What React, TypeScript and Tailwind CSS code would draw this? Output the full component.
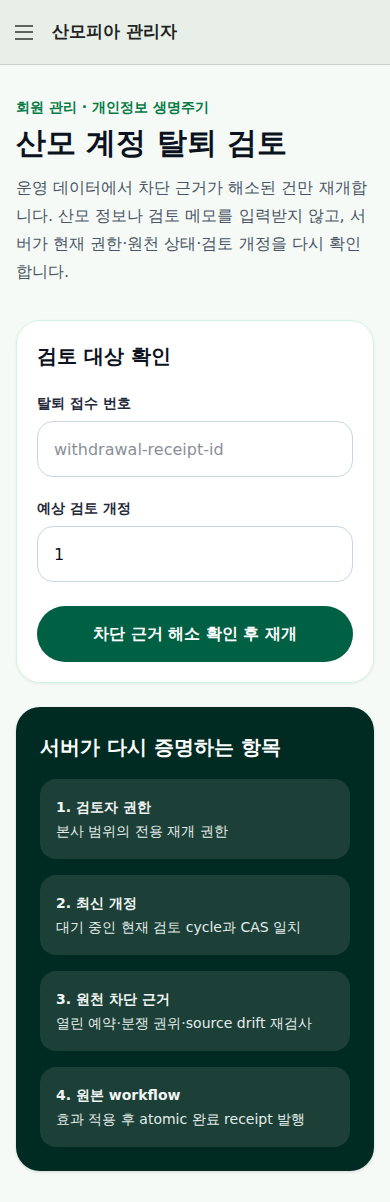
export default function App() {
  const items = [
    { t: "1. 검토자 권한", d: "본사 범위의 전용 재개 권한" },
    { t: "2. 최신 개정", d: "대기 중인 현재 검토 cycle과 CAS 일치" },
    { t: "3. 원천 차단 근거", d: "열린 예약·분쟁 권위·source drift 재검사" },
    { t: "4. 원본 workflow", d: "효과 적용 후 atomic 완료 receipt 발행" },
  ];
  return (
    <div
      className="min-h-[1202px] bg-[#f5faf6] text-[#0f172a]"
      style={{ fontFamily: '"DejaVu Sans", sans-serif' }}
    >
      <header className="h-[65px] bg-[#e8efe9] border-b border-[#c9cfcb] flex items-center px-[15px] gap-[19px]">
        <div className="flex flex-col gap-[4.5px] w-[18px]">
          <span className="block h-[2px] bg-[#5f6360]" />
          <span className="block h-[2px] bg-[#5f6360]" />
          <span className="block h-[2px] bg-[#5f6360]" />
        </div>
        <span className="text-[17px] font-semibold text-[#1f2321]">산모피아 관리자</span>
      </header>

      <main className="px-4 pt-[32px] pb-8">
        <p className="text-[14px] font-bold text-[#067a47] leading-[20px]">회원 관리 · 개인정보 생명주기</p>
        <h1 className="mt-[8px] text-[30px] font-bold leading-[36px] text-[#0b1220]">산모 계정 탈퇴 검토</h1>
        <p className="mt-[13px] text-[16px] leading-[28px] text-[#4a5565]">
          운영 데이터에서 차단 근거가 해소된 건만 재개합니다. 산모 정보나 검토 메모를 입력받지 않고, 서버가 현재 권한·원천 상태·검토 개정을 다시 확인합니다.
        </p>

        <section className="mt-[34px] bg-white rounded-[24px] border border-[#d4f2e1] shadow-[0_1px_3px_rgba(0,0,0,0.06)] px-[20px] pt-[20px] pb-[20px]">
          <h2 className="text-[20px] font-semibold leading-[30px] text-[#0b1220]">검토 대상 확인</h2>
          <label className="block mt-[22px] text-[14px] font-bold leading-[20px] text-[#1e293b]">탈퇴 접수 번호</label>
          <input
            className="mt-[8px] w-full h-[56px] rounded-[16px] border border-[#cbd5e1] px-[16px] text-[16px] outline-none placeholder:text-[#8a8f98]"
            placeholder="withdrawal-receipt-id"
          />
          <label className="block mt-[21px] text-[14px] font-bold leading-[20px] text-[#1e293b]">예상 검토 개정</label>
          <input
            className="mt-[8px] w-full h-[56px] rounded-[16px] border border-[#cbd5e1] px-[16px] text-[16px] outline-none text-[#0b1220]"
            defaultValue="1"
          />
          <button className="mt-[24px] w-full h-[56px] rounded-full bg-[#006044] text-white text-[16px] font-bold">
            차단 근거 해소 확인 후 재개
          </button>
        </section>

        <section className="mt-[24px] bg-[#002b22] rounded-[24px] shadow-[0_1px_3px_rgba(0,0,0,0.15)] p-[24px]">
          <h2 className="text-[20px] font-semibold leading-[30px] text-white mt-[1px]">서버가 다시 증명하는 항목</h2>
          <div className="mt-[17px] flex flex-col gap-[16px]">
            {items.map((it) => (
              <div key={it.t} className="bg-[#1c4038] rounded-[16px] h-[80px] px-[16px] flex flex-col justify-center">
                <div className="text-[14px] font-bold leading-[20px] text-[#f1f5f3]">{it.t}</div>
                <div className="mt-[4px] text-[14px] leading-[20px] text-[#e3ece8]">{it.d}</div>
              </div>
            ))}
          </div>
        </section>
      </main>
    </div>
  );
}
